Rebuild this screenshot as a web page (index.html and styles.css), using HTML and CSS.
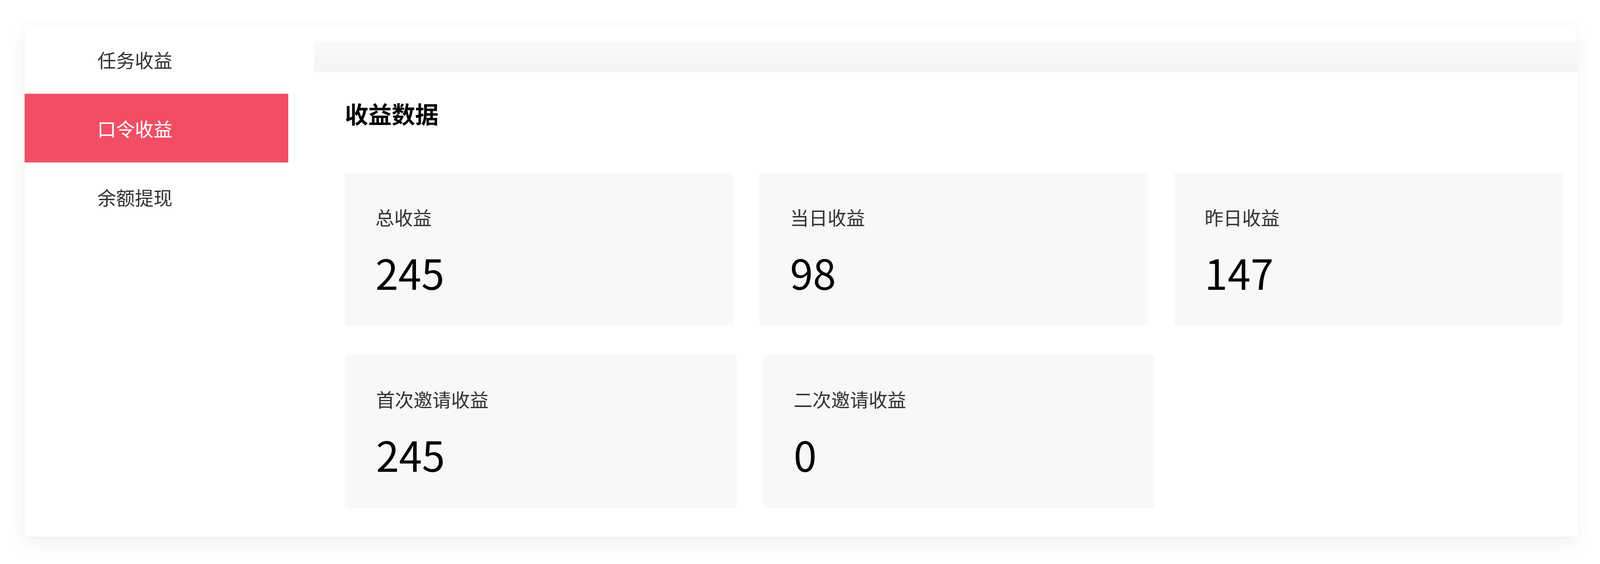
FILE: index.html
```html
<!DOCTYPE html>
<html lang="zh-CN">
<head>
<meta charset="utf-8">
<meta name="viewport" content="width=device-width, initial-scale=1">
<title>收益数据</title>
<link rel="stylesheet" href="styles.css">
</head>
<body>
<div class="wrapper">
  <aside class="sidebar">
    <div class="nav-item">任务收益</div>
    <div class="nav-item active">口令收益</div>
    <div class="nav-item">余额提现</div>
  </aside>
  <main class="main">
    <div class="main-band"></div>
    <section class="panel">
      <h2 class="panel-title">收益数据</h2>
      <div class="row row-first">
        <div class="stat">
          <div class="stat-label">总收益</div>
          <div class="stat-value">245</div>
        </div>
        <div class="stat">
          <div class="stat-label">当日收益</div>
          <div class="stat-value">98</div>
        </div>
        <div class="stat">
          <div class="stat-label">昨日收益</div>
          <div class="stat-value">147</div>
        </div>
      </div>
      <div class="row row-second">
        <div class="stat">
          <div class="stat-label">首次邀请收益</div>
          <div class="stat-value">245</div>
        </div>
        <div class="stat">
          <div class="stat-label">二次邀请收益</div>
          <div class="stat-value">0</div>
        </div>
      </div>
    </section>
  </main>
</div>
</body>
</html>
```

FILE: styles.css
```css
/* design grid: 4816 x 1444 units mapped onto the viewport */
:root {
  --x: calc(100vw / 4816);
  --y: calc(100vh / 1444);
}

* {
  box-sizing: border-box;
}

html, body {
  margin: 0;
  padding: 0;
  background: #ffffff;
  overflow: hidden;
}

body {
  font-family: "Noto Sans CJK SC", "Noto Sans", sans-serif;
  color: #333333;
  width: 100vw;
  height: 100vh;
}

.wrapper {
  display: flex;
  margin: calc(64 * var(--y)) 0 0 calc(74 * var(--x));
  width: calc(4670 * var(--x));
  height: calc(1310 * var(--y));
  background: #ffffff;
  box-shadow: 0 calc(18 * var(--y)) calc(44 * var(--y)) rgba(0, 0, 0, 0.06),
              0 0 calc(12 * var(--y)) rgba(0, 0, 0, 0.03);
}

.sidebar {
  flex: 0 0 calc(794 * var(--x));
  background: #ffffff;
  display: flex;
  flex-direction: column;
}

.nav-item {
  height: calc(176 * var(--y));
  display: flex;
  align-items: center;
  padding-left: calc(219 * var(--x));
  font-size: calc(48 * var(--y));
  line-height: calc(48 * var(--y));
  color: #333333;
  white-space: nowrap;
}

.nav-item.active {
  background: #f14e66;
  color: #ffffff;
}

.main {
  flex: 1;
  margin-left: calc(77 * var(--x));
  display: flex;
  flex-direction: column;
  padding-top: calc(44 * var(--y));
}

.main-band {
  height: calc(77 * var(--y));
  background: linear-gradient(#fafafa, #f4f4f4);
}

.panel {
  flex: 1;
  background: #ffffff;
  padding: calc(75 * var(--y)) calc(45 * var(--x)) 0 calc(93 * var(--x));
}

.panel-title {
  margin: 0;
  font-size: calc(60 * var(--y));
  line-height: calc(60 * var(--y));
  font-weight: 700;
  color: #000000;
  white-space: nowrap;
}

.row {
  display: flex;
}

.row-first {
  margin-top: calc(123 * var(--y));
  gap: calc(79 * var(--x));
}

.row-first .stat {
  flex: 0 0 calc(1169 * var(--x));
  height: calc(390 * var(--y));
}

.row-second {
  margin-top: calc(76 * var(--y));
  margin-left: calc(2 * var(--x));
  gap: calc(80 * var(--x));
}

.row-second .stat {
  flex: 0 0 calc(1177 * var(--x));
  height: calc(391 * var(--y));
}

.stat {
  background: #f8f8f8;
  padding: calc(88 * var(--y)) 0 0 calc(92 * var(--x));
}

.stat-label {
  font-size: calc(48 * var(--y));
  line-height: calc(48 * var(--y));
  color: #333333;
  white-space: nowrap;
}

.stat-value {
  margin-top: calc(63 * var(--y));
  font-size: calc(106 * var(--y));
  line-height: calc(108 * var(--y));
  color: #000000;
}
```
